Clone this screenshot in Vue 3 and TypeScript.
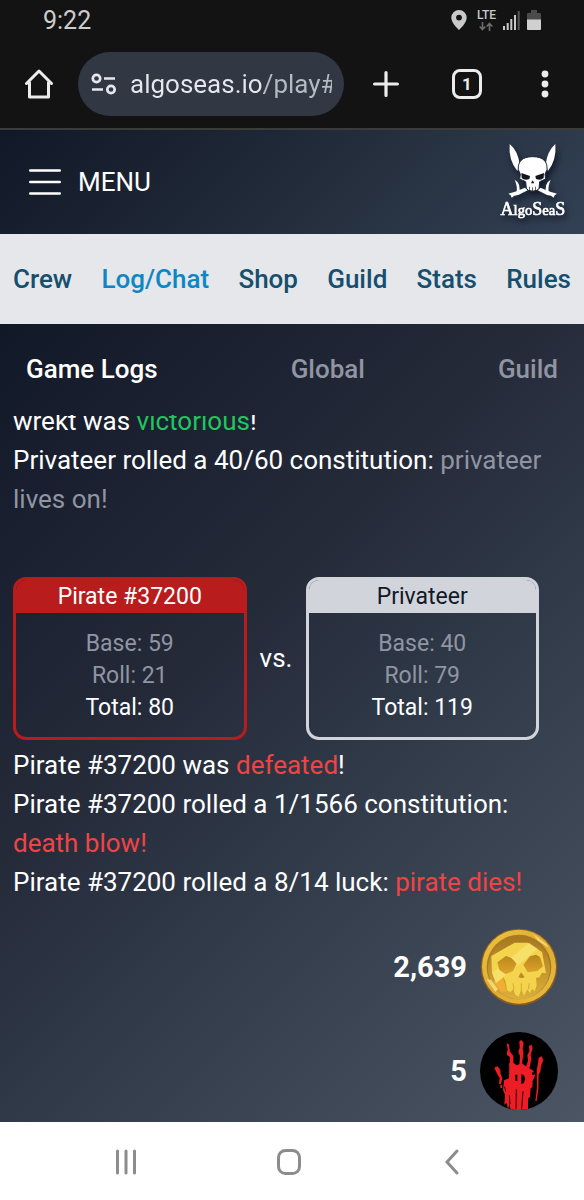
<script setup lang="ts">
import { ref } from 'vue'

type Tone = 'plain' | 'good' | 'bad' | 'muted'
interface Part { text: string; tone: Tone }
interface Fighter { name: string; side: string; base: number; roll: number; total: number }

const url = ref('algoseas.io/play#')
const sections = ['Crew', 'Log/Chat', 'Shop', 'Guild', 'Stats', 'Rules']
const activeSection = ref('Log/Chat')
const tabs = ['Game Logs', 'Global', 'Guild']
const activeTab = ref('Game Logs')

const earlier: Part[][] = [
  [{ text: 'wrekt was ', tone: 'plain' }, { text: 'victorious', tone: 'good' }, { text: '!', tone: 'plain' }],
  [{ text: 'Privateer rolled a 40/60 constitution: ', tone: 'plain' }, { text: 'privateer lives on!', tone: 'muted' }],
]
const fighters: Fighter[] = [
  { name: 'Pirate #37200', side: 'pirate', base: 59, roll: 21, total: 80 },
  { name: 'Privateer', side: 'privateer', base: 40, roll: 79, total: 119 },
]
const outcome: Part[][] = [
  [{ text: 'Pirate #37200 was ', tone: 'plain' }, { text: 'defeated', tone: 'bad' }, { text: '!', tone: 'plain' }],
  [{ text: 'Pirate #37200 rolled a 1/1566 constitution: ', tone: 'plain' }, { text: 'death blow!', tone: 'bad' }],
  [{ text: 'Pirate #37200 rolled a 8/14 luck: ', tone: 'plain' }, { text: 'pirate dies!', tone: 'bad' }],
]
</script>

<template>
  <div class="phone">
    <div class="chrome">
      <div class="status">
        <span class="clock">9:22</span>
        <div class="signals">
          <svg width="16" height="20" viewBox="0 0 16 20" aria-hidden="true">
            <path fill="#c9c9c9" fill-rule="evenodd" d="M8 0a7.700 7.700 0 0 0-7.700 7.700C.3 13 8 20 8 20s7.700-7 7.700-12.300A7.700 7.700 0 0 0 8 0Zm0 4.700a2.900 2.900 0 1 1 0 5.800 2.900 2.900 0 0 1 0-5.800Z" />
          </svg>
          <div class="lte">
            <span>LTE</span>
            <svg width="14" height="9" viewBox="0 0 14 9" fill="none" stroke="#6b6b6b" stroke-width="1.600" aria-hidden="true">
              <path d="M3.500 0v7M.700 4.500l2.800 3 2.800-3M10.500 9V2M7.700 4.500l2.800-3 2.800 3" />
            </svg>
          </div>
          <svg width="17" height="19" viewBox="0 0 17 19" aria-hidden="true">
            <path fill="#c9c9c9" d="M0 15h2v4H0zM3.700 12h2v7h-2zM7.300 8h2v11h-2zM11 4h2v15h-2z" />
            <path fill="#565656" d="M14.700 0h2v19h-2z" />
          </svg>
          <svg width="14" height="20" viewBox="0 0 14 20" aria-hidden="true">
            <path fill="#4b4b4b" d="M4 0h6v3h3q1 0 1 1v6H0V4q0-1 1-1h3z" />
            <path fill="#d0d0d0" d="M0 9.500h14V19q0 1-1 1H1q-1 0-1-1z" />
          </svg>
        </div>
      </div>
      <div class="toolbar">
        <button class="tool" aria-label="Home">
          <svg width="30" height="30" viewBox="0 0 30 30" fill="none" stroke="#ececec" stroke-width="3" stroke-linejoin="round" stroke-linecap="round" aria-hidden="true">
            <path d="M2.500 14.500 15 2l12.500 12.500M5.500 13.500v14.500h19V13.500" />
          </svg>
        </button>
        <div class="address">
          <button class="site" aria-label="Site settings">
            <svg width="26" height="22" viewBox="0 0 26 22" fill="none" stroke="#e6e8ee" stroke-width="2.700" aria-hidden="true">
              <circle cx="5.500" cy="5.500" r="3.700" /><path d="M13 5.500h11M1 16.500h11" /><circle cx="20" cy="16.500" r="3.700" />
            </svg>
          </button>
          <input v-model="url" class="url" aria-label="Address" type="text" spellcheck="false" />
        </div>
        <button class="tool" aria-label="New tab">
          <svg width="26" height="26" viewBox="0 0 26 26" stroke="#ececec" stroke-width="3.200" stroke-linecap="round" aria-hidden="true">
            <path d="M13 1.600v22.800M1.600 13h22.800" />
          </svg>
        </button>
        <button class="tool" aria-label="Open tabs"><span class="count">1</span></button>
        <button class="tool" aria-label="More">
          <svg width="8" height="28" viewBox="0 0 8 28" fill="#ececec" aria-hidden="true">
            <circle cx="4" cy="4" r="3.400" /><circle cx="4" cy="14" r="3.400" /><circle cx="4" cy="24" r="3.400" />
          </svg>
        </button>
      </div>
    </div>

    <header class="header">
      <button class="menu">
        <svg width="32" height="26" viewBox="0 0 32 26" stroke="#fff" stroke-width="2.400" stroke-linecap="round" aria-hidden="true">
          <path d="M1.200 1.500h29.600M1.200 13h29.600M1.200 24.500h29.600" />
        </svg>
        <span>MENU</span>
      </button>
      <svg class="logo" width="68" height="82" viewBox="44 34 204 246" role="img" aria-label="AlgoSeaS">
        <g fill="#fff">
          <path d="M76 43Q72 92 99 124L106 104Q101 64 76 43Z" />
          <path d="M213 43Q217 92 191 124L184 104Q189 64 213 43Z" />
          <path d="M91 150q22 12 12 44l-7-2q5-20-5-42ZM199 150q-22 12-12 44l7-2q-5-20 5-42Z" />
          <path d="m72 192 20-6 30-12 8 8-28 14-12 2-8 6-3-7zM218 192l-20-6-30-12-8 8 28 14 12 2 8 6 3-7z" />
          <path stroke="#202c3e" stroke-width="3" d="M145 81c-32 0-45 15-43 39l6 14-2 14 18 8 2 20 6 6q13 5 26 0l6-6 2-20 18-8-2-14 6-14c2-24-11-39-43-39Z" />
        </g>
        <g fill="#10151f">
          <path d="m111 130 26 9-2 9q-15 5-23-3zM179 130l-26 9 2 9q15 5 23-3zM145 152l5 9h-10z" />
          <path d="M135 171h2v11h-2zM144 173h2v11h-2zM153 171h2v11h-2z" />
        </g>
        <text class="wordmark" x="146" y="255" text-anchor="middle"><tspan class="tall">A</tspan>lgo<tspan class="tall">S</tspan>ea<tspan class="tall">S</tspan></text>
      </svg>
    </header>

    <nav class="sections">
      <a v-for="s in sections" :key="s" href="#" :class="{ current: s === activeSection }" @click.prevent="activeSection = s">{{ s }}</a>
    </nav>

    <main class="play">
      <div class="tabs" role="tablist">
        <button v-for="t in tabs" :key="t" role="tab" :aria-selected="t === activeTab" @click="activeTab = t">{{ t }}</button>
      </div>
      <div class="log">
        <div class="entries">
          <p v-for="(line, i) in earlier" :key="i"><span v-for="(p, j) in line" :key="j" :class="p.tone">{{ p.text }}</span></p>
          <div class="duel">
            <template v-for="(f, i) in fighters" :key="f.name">
              <span v-if="i" class="versus">vs.</span>
              <section class="card" :class="f.side">
                <h2>{{ f.name }}</h2>
                <div class="rolls">
                  <div>Base: {{ f.base }}</div>
                  <div>Roll: {{ f.roll }}</div>
                  <div class="total">Total: {{ f.total }}</div>
                </div>
              </section>
            </template>
          </div>
          <p v-for="(line, i) in outcome" :key="i"><span v-for="(p, j) in line" :key="j" :class="p.tone">{{ p.text }}</span></p>
        </div>
      </div>
      <div class="purse">
        <div class="holding">
          <span>2,639</span>
          <svg width="78" height="78" viewBox="28 24 234 234" role="img" aria-label="Coins">
            <defs>
              <linearGradient id="rim" x1="0" y1="0" x2="1" y2="1"><stop offset="0" stop-color="#efc63f" /><stop offset=".5" stop-color="#dcab33" /><stop offset="1" stop-color="#e8bd43" /></linearGradient>
              <linearGradient id="well" x1="0" y1="0" x2="0" y2="1"><stop offset="0" stop-color="#a8781f" /><stop offset="1" stop-color="#dcae3a" /></linearGradient>
              <linearGradient id="eye" x1="0" y1="0" x2="0" y2="1"><stop offset="0" stop-color="#b8851c" /><stop offset="1" stop-color="#dfa52b" /></linearGradient>
              <clipPath id="face"><circle cx="145" cy="141" r="97" /></clipPath>
            </defs>
            <circle cx="145" cy="141" r="115" fill="#8b5c20" />
            <circle cx="145" cy="140" r="111" fill="url(#rim)" />
            <circle cx="145" cy="141" r="97" fill="#a97a20" />
            <circle cx="145" cy="145" r="93" fill="url(#well)" />
            <g clip-path="url(#face)">
              <path d="M68 186 96 170l12 44-16 2z" fill="#f1ae32" />
              <path d="M62 108 132 68h40l42 28 12 64-12-2-8 14-10 2 2 22-6 18-8-8-6 14-8-12-10 20-8-20-8 22-10-6-6-18-8 10-10-4-6-30-6-10-22 18-12-32z" fill="#f3d44c" />
              <path d="m64 160 112-92 26 18L90 178l-14 10z" fill="#fff6a0" opacity=".35" />
              <path d="m80 127 26-19 16 6 16 17-11 22-22 10-19-13zM158 134l20-25 18-5 12 7 9 28-17 14-29 4z" fill="url(#eye)" />
              <path d="m143 172 8-15 11 14-8 4z" fill="#c58725" />
              <path d="m127 190 3 18M152 190v20M176 190l-3 18" stroke="#dca738" stroke-width="3" />
            </g>
            <path d="m188 43 38 28 8 12-33-22zM48 178l13 1 21 29-8 7z" fill="#ffe98c" opacity=".75" />
          </svg>
        </div>
        <div class="holding">
          <span>5</span>
          <svg width="78" height="78" viewBox="30 36 234 234" role="img" aria-label="Bloody hands">
            <defs><clipPath id="disc"><circle cx="147" cy="153" r="117" /></clipPath></defs>
            <circle cx="147" cy="153" r="117" fill="#000" />
            <g clip-path="url(#disc)" fill="#ee1c25">
              <path d="m102 181 15-6 1-45 12-2 10 8 15-6 15 10 20 12 5 16-7 14-1 20-5 2-2 26-6 6v40h-52l-3-26-5 18-4-20-7 6 2-30-6-14z" />
              <path d="m110 70 6 2 4 23 10 13v30h-12l2-26-10-8 3-16zM148 64l6-4 7 8-3 17 2 15-4 34-8 2 2-28-5-12 4-12zM177 78l7-4 4 10-6 20 2 14-6 28-10-6 6-18-2-16 6-12z" />
              <path d="m73 143 9-4 9 10 1 14 5 12-4 18-6-2 2-17-8-13zM206 113l9-4 5 11-7 18-2 18-5 7-1 45-5 36-4-1 5-43-1-48 4-23zM91 195h5v9h-5z" />
              <path d="M136 164h6v19h-6zM153 162l9 4 4 11-5 13-7 2zM186 157h6v8h-6z" fill="#120205" />
              <path d="m118 226 2 26M139 208l-1 58M159 214l-4 52M104 200l3 14" stroke="#240508" stroke-width="3" />
            </g>
          </svg>
        </div>
      </div>
    </main>

    <footer class="keys">
      <button aria-label="Recent apps">
        <svg width="26" height="26" viewBox="0 0 26 26" stroke="#8c8c8c" stroke-width="3" stroke-linecap="round" aria-hidden="true"><path d="M4.500 2v22M13 2v22M21.500 2v22" /></svg>
      </button>
      <button aria-label="Home screen">
        <svg width="26" height="28" viewBox="0 0 26 28" fill="none" stroke="#8c8c8c" stroke-width="3" aria-hidden="true"><rect x="2.500" y="2.500" width="21" height="23" rx="7" /></svg>
      </button>
      <button aria-label="Back">
        <svg width="16" height="26" viewBox="0 0 16 26" fill="none" stroke="#8c8c8c" stroke-width="3" stroke-linecap="round" aria-hidden="true"><path d="M13 2 3 13l10 11" /></svg>
      </button>
    </footer>
  </div>
</template>

<style>
body { margin: 0; }
</style>

<style scoped>
.phone { min-height: 100vh; display: flex; flex-direction: column; font-family: Roboto, "Liberation Sans", sans-serif; font-size: 26px; line-height: 39px; color: #fff; background: #fff; }
button { border: 0; padding: 0; margin: 0; background: none; font: inherit; color: inherit; }
svg { display: block; flex: none; }
.chrome { background: #131313; border-bottom: 2px solid #3b3b3b; }
.status { height: 40px; padding: 0 43px; display: flex; align-items: center; justify-content: space-between; }
.clock { font-size: 25px; color: #cdcdcd; }
.signals { display: flex; align-items: center; gap: 7px; }
.lte { display: flex; flex-direction: column; align-items: center; gap: 1px; margin-left: 3px; font-size: 12px; line-height: 11px; font-weight: 500; color: #c9c9c9; }
.toolbar { display: flex; align-items: center; padding: 12px 0; height: 64px; }
.tool { flex: none; width: 78px; height: 64px; display: flex; align-items: center; justify-content: center; }
.address + .tool { width: 84px; }
.address { flex: 1; min-width: 0; height: 64px; box-sizing: border-box; border-radius: 32px; background: #313743; padding: 0 12px 0 13px; display: flex; align-items: center; gap: 13px; }
.url { flex: 1; min-width: 0; border: 0; padding: 0; outline: 0; font: inherit; color: transparent; background: linear-gradient(to right, #e6e8ee 134px, #b6bac3 134px); background-clip: text; -webkit-background-clip: text; }
.count { width: 24px; height: 24px; border: 3px solid #ececec; border-radius: 8px; font-size: 17px; line-height: 24px; font-weight: 700; color: #ececec; }
.header { height: 104px; box-sizing: border-box; padding: 0 17px 0 29px; display: flex; align-items: center; justify-content: space-between; background: linear-gradient(135deg, #111827, #222b39 50%, #334155); }
.menu { display: flex; align-items: center; gap: 17px; }
.logo { filter: drop-shadow(2px 4px 3px #111827); }
.wordmark { font-family: "Liberation Serif", serif; font-size: 44px; fill: #fff; stroke: #fff; stroke-width: 2px; }
.wordmark .tall { font-size: 54px; }
.sections { height: 90px; box-sizing: border-box; padding: 0 13px; display: flex; align-items: center; justify-content: space-between; background: #e5e7eb; font-weight: 500; }
.sections a { color: #164e6d; text-decoration: none; }
.sections a.current { color: #0e86c4; }
.play { flex: 1; display: flex; flex-direction: column; background: linear-gradient(135deg, #111827, #262b3a 40%, #2f3948 58%, #4b5563); }
.tabs { display: flex; justify-content: space-between; padding: 26px 26px; }
.tabs button { font-weight: 500; color: #9095a2; }
.tabs button[aria-selected="true"] { color: #fff; }
.log { overflow: hidden; padding: 0 13px; }
.entries { margin-top: -13px; }
.entries p { margin: 0; }
.good { color: #22c55e; }
.bad { color: #ef4444; }
.muted { color: #9095a2; }
.duel { display: flex; align-items: center; margin: 58px 32px 6px 0; }
.versus { flex: none; width: 59px; text-align: center; }
.card { flex: 1; border: 3px solid; border-radius: 13px; overflow: hidden; font-size: 23px; line-height: 32px; text-align: center; }
.card h2 { margin: 0; padding-top: 1px; font: inherit; }
.rolls { padding: 15px 0 13px; color: #9095a2; }
.total { color: #fff; }
.pirate { border-color: #b91c1c; }
.pirate h2 { background: #b91c1c; color: #fff; }
.privateer { border-color: #d1d5db; }
.privateer h2 { background: #d1d5db; color: #111827; }
.purse { margin-top: auto; padding: 26px 26px 12px; display: flex; flex-direction: column; gap: 26px; }
.holding { display: flex; align-items: center; justify-content: flex-end; gap: 13px; font-size: 29px; font-weight: 700; }
.keys { height: 78px; padding: 2px 50px 0 44px; box-sizing: border-box; display: flex; align-items: center; background: #fff; }
.keys button { flex: 1; display: flex; justify-content: center; }
</style>
